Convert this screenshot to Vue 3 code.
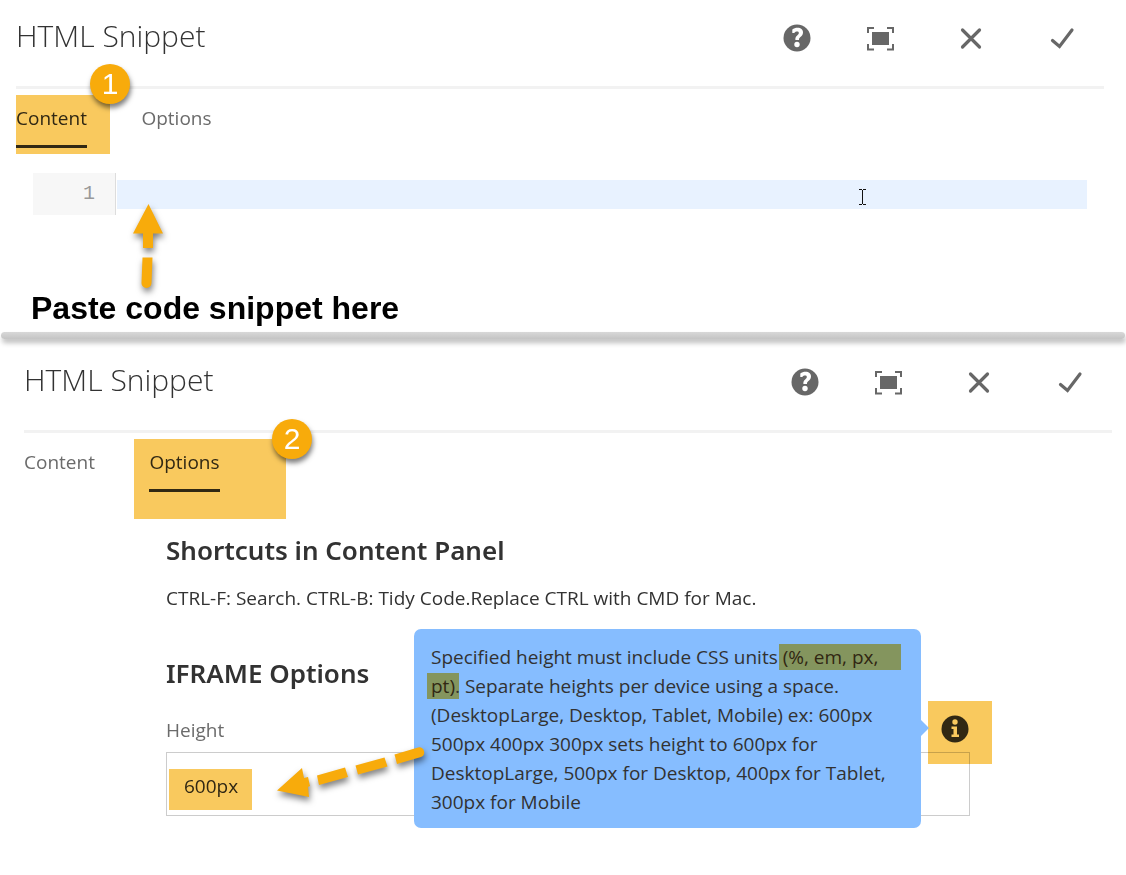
<script setup>
import { ref } from 'vue'

const code = ref('')
const height = ref('600px')
const panels = [
  { id: 'content', active: 'Content', step: 1 },
  { id: 'options', active: 'Options', step: 2 },
]
const tabs = ['Content', 'Options']
</script>

<template>
  <main class="page">
    <template v-for="panel in panels" :key="panel.id">
      <hr v-if="panel.id === 'options'" class="divider" />
      <section class="dialog" :class="panel.id">
        <header class="header">
          <h1>HTML Snippet</h1>
          <div class="actions">
            <button type="button" aria-label="Help">
              <svg viewBox="0 0 28 28">
                <circle cx="14" cy="14" r="13.500" fill="#676767" />
                <path d="M9.300 9V5.400C10.700 4.300 12.600 3.800 14.500 3.800c3.400 0 5.500 1.800 5.500 4.600 0 2.300-1.300 3.500-2.600 4.700-1 .9-1.500 1.500-1.400 2.900h-3.600c-.3-2.300.6-3.400 1.800-4.500 1-1 1.600-1.600 1.600-2.500 0-.9-.6-1.400-1.700-1.400-1 0-2 .4-2.800 1.400z" fill="#fff" />
                <circle cx="14" cy="20.500" r="2.700" fill="#fff" />
              </svg>
            </button>
            <button type="button" aria-label="Toggle fullscreen">
              <svg viewBox="0 0 28 28">
                <path d="M2 9V4H8M21 4h6v5M27 20v5.500h-6M8 25.500H2V20" fill="none" stroke="#676767" stroke-width="2" />
                <path d="M6 8h17v13H6z" fill="#676767" />
              </svg>
            </button>
            <button type="button" class="wide" aria-label="Cancel">
              <svg viewBox="0 0 28 28">
                <path d="M5.500 6l17 17M22.500 6l-17 17" fill="none" stroke="#676767" stroke-width="3.200" stroke-linecap="round" />
              </svg>
            </button>
            <button type="button" class="wide" aria-label="Done">
              <svg viewBox="0 0 28 28">
                <path d="M4.500 16.500l7 6L24 6" fill="none" stroke="#676767" stroke-width="3.200" stroke-linecap="round" />
              </svg>
            </button>
          </div>
        </header>

        <nav class="tabs" role="tablist">
          <button
            v-for="tab in tabs"
            :key="tab"
            type="button"
            role="tab"
            class="tab"
            :class="{ active: tab === panel.active }"
            :aria-selected="tab === panel.active"
          >
            {{ tab }}
            <span v-if="tab === panel.active" class="highlight tab-highlight"></span>
            <span v-if="tab === panel.active" class="badge">{{ panel.step }}</span>
          </button>
        </nav>

        <template v-if="panel.id === 'content'">
          <div class="editor">
            <label class="gutter" for="code">1</label>
            <textarea id="code" v-model="code" rows="1" aria-label="Line 1"></textarea>
            <svg class="caret" viewBox="0 0 9 18">
              <path d="M1 1.500h3M5 1.500h3M1 16.500h3M5 16.500h3M4.500 2v14" fill="none" stroke="#111" />
            </svg>
            <svg class="arrow-up" viewBox="0 0 40 96">
              <path d="M19.500 5L34 34.500H24V49H14V34.500H4z" fill="#f8ab0b" />
              <path d="M13.500 58.500H23.500L22.500 84a5 5 0 0 1-10 0z" fill="#f8ab0b" />
            </svg>
          </div>
          <p class="note">Paste code snippet here</p>
        </template>

        <div v-else class="options-body">
          <h2>Shortcuts in Content Panel</h2>
          <p class="shortcuts">CTRL-F: Search. CTRL-B: Tidy Code.Replace CTRL with CMD for Mac.</p>
          <h2>IFRAME Options</h2>
          <label class="label" for="height">Height</label>
          <div class="field">
            <input id="height" v-model="height" type="text" />
            <span class="highlight value-highlight"></span>
            <button type="button" class="info" aria-label="About height">
              <svg viewBox="0 0 28 28">
                <circle cx="14" cy="14" r="13.500" fill="#323232" />
                <circle cx="14" cy="7" r="2.700" fill="#fff" />
                <path d="M10.500 11.500h5.500v8h2v2.500h-7.500v-2.500h2v-5.500h-2z" fill="#fff" />
              </svg>
              <span class="highlight info-highlight"></span>
            </button>
            <div class="tooltip" role="tooltip">
              Specified height must include CSS units <mark class="first">(%, em, px,</mark><br />
              <mark>pt)</mark>. Separate heights per device using a space.<br />
              (DesktopLarge, Desktop, Tablet, Mobile) ex: 600px<br />
              500px 400px 300px sets height to 600px for<br />
              DesktopLarge, 500px for Desktop, 400px for Tablet,<br />
              300px for Mobile
              <svg class="arrow-left" viewBox="0 0 160 70">
                <g fill="#f8ab0b">
                  <path d="M7 49.500L32 27l2 10 4-1 2 9-2 1 1 10z" />
                  <path d="M47 34.500L75 26.500l3 9.500-29 8z" />
                  <path d="M85.500 24.500l29-8 3 9-29.500 8z" />
                  <path d="M124.500 13.500L148 6.500a5 5 0 0 1 3 9.500l-24 7z" />
                </g>
              </svg>
            </div>
          </div>
        </div>
      </section>
    </template>
  </main>
</template>

<style>
body {
  margin: 0;
  background: #fff;
}
</style>

<style scoped>
.page {
  padding-bottom: 40px;
  font-family: "Open Sans", "Noto Sans", sans-serif;
  font-size: 19px;
  color: #323232;
}

.dialog {
  padding: 0 22px 0 16px;
}

.dialog.options {
  padding: 0 14px 0 24px;
}

button {
  padding: 0;
  border: 0;
  background: none;
  font: inherit;
  color: inherit;
}

svg {
  display: block;
}

.header {
  display: flex;
  align-items: center;
  justify-content: space-between;
  height: 76px;
  padding-bottom: 10px;
  border-bottom: 3px solid #f2f2f2;
}

.header h1 {
  margin: 0;
  padding-bottom: 4px;
  font-size: 30px;
  font-weight: 300;
  line-height: 40px;
}

.actions {
  display: flex;
  gap: 55px;
  padding-right: 28px;
}

.actions button,
.actions svg {
  width: 28px;
  height: 28px;
}

.actions .wide {
  margin-left: 8px;
}

.tabs {
  display: flex;
  gap: 54px;
  height: 59px;
  margin-top: 6px;
}

.tab {
  position: relative;
  width: 71px;
  height: 53px;
  padding-bottom: 4px;
  border-bottom: 3px solid transparent;
  color: #6b6b6b;
  white-space: nowrap;
}

.tab.active {
  color: #323232;
  border-bottom-color: #323232;
}

.highlight {
  position: absolute;
  background: #f9c95e;
  mix-blend-mode: multiply;
  pointer-events: none;
}

.tab-highlight {
  top: 0;
  left: 0;
  width: 94px;
  height: 59px;
}

.options .tab-highlight {
  left: -15px;
  width: 152px;
  height: 80px;
}

.badge {
  position: absolute;
  top: -31px;
  left: 74px;
  width: 40px;
  border-radius: 50%;
  background: #f8ab0b;
  box-shadow: 1px 4px 5px rgba(0, 0, 0, 0.5);
  color: #fff;
  font: 30px/40px "Liberation Sans", Arial, sans-serif;
}

.options .badge {
  top: -20px;
  left: 123px;
}

.editor {
  position: relative;
  display: flex;
  align-items: center;
  gap: 1px;
  margin: 19px 17px 0;
}

.gutter {
  box-sizing: border-box;
  width: 83px;
  padding-right: 20px;
  border-right: 1px solid #ddd;
  background: #f7f7f7;
  color: #999;
  font: 20px/42px "Liberation Mono", "Courier New", monospace;
  text-align: right;
}

.editor textarea {
  flex: 1;
  box-sizing: border-box;
  height: 29px;
  padding: 0 4px;
  border: 0;
  outline: 0;
  resize: none;
  overflow: hidden;
  background: #e8f2ff;
  font: 20px/29px "Liberation Mono", "Courier New", monospace;
}

.caret {
  position: absolute;
  top: 15px;
  right: 220px;
  width: 9px;
  height: 18px;
}

.arrow-up,
.arrow-left {
  position: absolute;
  filter: drop-shadow(1px 4px 3px rgba(0, 0, 0, 0.5));
}

.arrow-up {
  top: 26px;
  left: 96px;
  width: 40px;
  height: 96px;
}

.note {
  margin: 73px 0 0 15px;
  color: #000;
  font: bold 32px/40px "Liberation Sans", Arial, sans-serif;
}

.divider {
  height: 7px;
  margin: 4px 1px 5px;
  border: 0;
  border-radius: 4px;
  background: linear-gradient(#d8d8d8, #c4c4c4);
  box-shadow: 1px 4px 5px rgba(0, 0, 0, 0.25);
}

.options-body {
  margin: 34px 142px 0;
}

.options-body h2 {
  margin: 0;
  font-family: "Noto Sans", "Open Sans", sans-serif;
  font-size: 26px;
  font-weight: 600;
  line-height: 36px;
}

.shortcuts {
  margin: 15px 0 42px;
  line-height: 30px;
  white-space: nowrap;
}

.label {
  display: block;
  margin-top: 23px;
  color: #6b6b6b;
  line-height: 32px;
}

.field {
  position: relative;
  margin-top: 6px;
}

.field input {
  display: block;
  box-sizing: border-box;
  width: 100%;
  height: 64px;
  padding: 3px 17px 0;
  border: 1px solid #ccc;
  outline: 0;
  background: #fff;
  color: #323232;
  font: inherit;
}

.value-highlight {
  top: 17px;
  left: 3px;
  width: 83px;
  height: 41px;
}

.info {
  position: absolute;
  top: -37px;
  right: 1px;
  width: 28px;
  height: 28px;
}

.info-highlight {
  top: -14px;
  left: -13px;
  width: 64px;
  height: 63px;
}

.tooltip {
  position: absolute;
  top: -123px;
  right: 49px;
  box-sizing: border-box;
  width: 507px;
  padding: 14px 0 11px 17px;
  border-radius: 7px;
  background: #86bdff;
  line-height: 29px;
  white-space: nowrap;
}

.tooltip::after {
  content: "";
  position: absolute;
  top: 91px;
  left: 100%;
  border: 8px solid transparent;
  border-right: 0;
  border-left-color: #86bdff;
}

.tooltip mark {
  margin: 0 -4px;
  padding: 0 4px;
  background: #84955e;
  color: #312712;
}

.tooltip .first {
  padding-right: 23px;
}

.arrow-left {
  top: 112px;
  left: -144px;
  width: 160px;
  height: 70px;
}
</style>
